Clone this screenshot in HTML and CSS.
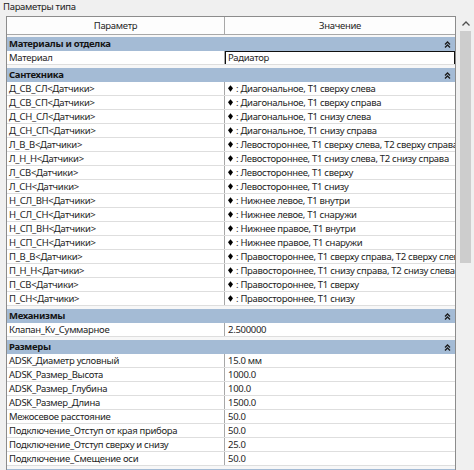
FILE: index.html
```html
<!DOCTYPE html>
<html lang="ru">
<head>
<meta charset="utf-8">
<title>Параметры типа</title>
<link rel="stylesheet" href="styles.css">
</head>
<body>
<div class="title">Параметры типа</div>
<div class="panel">
  <div class="grid">
    <div class="head">
      <div class="hcell hleft">Параметр</div>
      <div class="hcell hright">Значение</div>
    </div>

    <div class="group">
      <div class="ghead"><span class="gname">Материалы и отделка</span><svg class="chev" viewBox="0 0 7 7"><polyline points="1,3.5 3.5,1 6,3.5"/><polyline points="1,6.5 3.5,4 6,6.5"/></svg></div>
      <div class="row"><div class="k">Материал</div><div class="v"><div class="input">Радиатор</div></div></div>
    </div>

    <div class="group">
      <div class="ghead"><span class="gname">Сантехника</span><svg class="chev" viewBox="0 0 7 7"><polyline points="1,3.5 3.5,1 6,3.5"/><polyline points="1,6.5 3.5,4 6,6.5"/></svg></div>
      <div class="row"><div class="k">Д_СВ_СЛ&lt;Датчики&gt;</div><div class="v"><svg class="dia" viewBox="0 0 6 8"><polygon points="3,0 6,3.6 3,8 0,3.6"/></svg>: Диагональное, Т1 сверху слева</div></div>
      <div class="row"><div class="k">Д_СВ_СП&lt;Датчики&gt;</div><div class="v"><svg class="dia" viewBox="0 0 6 8"><polygon points="3,0 6,3.6 3,8 0,3.6"/></svg>: Диагональное, Т1 сверху справа</div></div>
      <div class="row"><div class="k">Д_СН_СЛ&lt;Датчики&gt;</div><div class="v"><svg class="dia" viewBox="0 0 6 8"><polygon points="3,0 6,3.6 3,8 0,3.6"/></svg>: Диагональное, Т1 снизу слева</div></div>
      <div class="row"><div class="k">Д_СН_СП&lt;Датчики&gt;</div><div class="v"><svg class="dia" viewBox="0 0 6 8"><polygon points="3,0 6,3.6 3,8 0,3.6"/></svg>: Диагональное, Т1 снизу справа</div></div>
      <div class="row"><div class="k">Л_В_В&lt;Датчики&gt;</div><div class="v"><svg class="dia" viewBox="0 0 6 8"><polygon points="3,0 6,3.6 3,8 0,3.6"/></svg>: Левостороннее, Т1 сверху слева, Т2 сверху справа</div></div>
      <div class="row"><div class="k">Л_Н_Н&lt;Датчики&gt;</div><div class="v"><svg class="dia" viewBox="0 0 6 8"><polygon points="3,0 6,3.6 3,8 0,3.6"/></svg>: Левостороннее, Т1 снизу слева, Т2 снизу справа</div></div>
      <div class="row"><div class="k">Л_СВ&lt;Датчики&gt;</div><div class="v"><svg class="dia" viewBox="0 0 6 8"><polygon points="3,0 6,3.6 3,8 0,3.6"/></svg>: Левостороннее, Т1 сверху</div></div>
      <div class="row"><div class="k">Л_СН&lt;Датчики&gt;</div><div class="v"><svg class="dia" viewBox="0 0 6 8"><polygon points="3,0 6,3.6 3,8 0,3.6"/></svg>: Левостороннее, Т1 снизу</div></div>
      <div class="row"><div class="k">Н_СЛ_ВН&lt;Датчики&gt;</div><div class="v"><svg class="dia" viewBox="0 0 6 8"><polygon points="3,0 6,3.6 3,8 0,3.6"/></svg>: Нижнее левое, Т1 внутри</div></div>
      <div class="row"><div class="k">Н_СЛ_СН&lt;Датчики&gt;</div><div class="v"><svg class="dia" viewBox="0 0 6 8"><polygon points="3,0 6,3.6 3,8 0,3.6"/></svg>: Нижнее левое, Т1 снаружи</div></div>
      <div class="row"><div class="k">Н_СП_ВН&lt;Датчики&gt;</div><div class="v"><svg class="dia" viewBox="0 0 6 8"><polygon points="3,0 6,3.6 3,8 0,3.6"/></svg>: Нижнее правое, Т1 внутри</div></div>
      <div class="row"><div class="k">Н_СП_СН&lt;Датчики&gt;</div><div class="v"><svg class="dia" viewBox="0 0 6 8"><polygon points="3,0 6,3.6 3,8 0,3.6"/></svg>: Нижнее правое, Т1 снаружи</div></div>
      <div class="row"><div class="k">П_В_В&lt;Датчики&gt;</div><div class="v"><svg class="dia" viewBox="0 0 6 8"><polygon points="3,0 6,3.6 3,8 0,3.6"/></svg>: Правостороннее, Т1 сверху справа, Т2 сверху слева</div></div>
      <div class="row"><div class="k">П_Н_Н&lt;Датчики&gt;</div><div class="v"><svg class="dia" viewBox="0 0 6 8"><polygon points="3,0 6,3.6 3,8 0,3.6"/></svg>: Правостороннее, Т1 снизу справа, Т2 снизу слева</div></div>
      <div class="row"><div class="k">П_СВ&lt;Датчики&gt;</div><div class="v"><svg class="dia" viewBox="0 0 6 8"><polygon points="3,0 6,3.6 3,8 0,3.6"/></svg>: Правостороннее, Т1 сверху</div></div>
      <div class="row"><div class="k">П_СН&lt;Датчики&gt;</div><div class="v"><svg class="dia" viewBox="0 0 6 8"><polygon points="3,0 6,3.6 3,8 0,3.6"/></svg>: Правостороннее, Т1 снизу</div></div>
    </div>

    <div class="group">
      <div class="ghead"><span class="gname">Механизмы</span><svg class="chev" viewBox="0 0 7 7"><polyline points="1,3.5 3.5,1 6,3.5"/><polyline points="1,6.5 3.5,4 6,6.5"/></svg></div>
      <div class="row"><div class="k">Клапан_Kv_Суммарное</div><div class="v">2.500000</div></div>
    </div>

    <div class="group">
      <div class="ghead"><span class="gname">Размеры</span><svg class="chev" viewBox="0 0 7 7"><polyline points="1,3.5 3.5,1 6,3.5"/><polyline points="1,6.5 3.5,4 6,6.5"/></svg></div>
      <div class="row"><div class="k">ADSK_Диаметр условный</div><div class="v">15.0 мм</div></div>
      <div class="row"><div class="k">ADSK_Размер_Высота</div><div class="v">1000.0</div></div>
      <div class="row"><div class="k">ADSK_Размер_Глубина</div><div class="v">100.0</div></div>
      <div class="row"><div class="k">ADSK_Размер_Длина</div><div class="v">1500.0</div></div>
      <div class="row"><div class="k">Межосевое расстояние</div><div class="v">50.0</div></div>
      <div class="row"><div class="k">Подключение_Отступ от края прибора</div><div class="v">50.0</div></div>
      <div class="row"><div class="k">Подключение_Отступ сверху и снизу</div><div class="v">25.0</div></div>
      <div class="row"><div class="k">Подключение_Смещение оси</div><div class="v">50.0</div></div>
    </div>

    <div class="group">
      <div class="ghead"></div>
    </div>
  </div>
  <div class="scroll">
    <div class="sarrow"><svg viewBox="0 0 8 5"><polyline points="0.5,4.5 4,1 7.5,4.5"/></svg></div>
    <div class="thumb"></div>
  </div>
</div>
</body>
</html>
```

FILE: styles.css
```css
html, body {
  margin: 0;
  padding: 0;
  height: 100%;
  overflow: hidden;
}
body {
  background: #f0f0f0;
  font-family: "Noto Sans", "Open Sans", sans-serif;
  font-size: 9.5px;
  letter-spacing: -0.3px;
  color: #1e1e1e;
}
.title {
  height: 16px;
  line-height: 14px;
  padding-left: 3px;
  color: #222;
}
.panel {
  display: flex;
  align-items: flex-start;
  padding-left: 6px;
}
.grid {
  width: 448px;
  border: 1px solid #8c8c8c;
  border-bottom: none;
  background: #f7f7f7;
  height: 460px;
  overflow: hidden;
}
.head {
  display: flex;
  height: 17px;
  background: #fdfdfd;
  border-bottom: 1px solid #a8a8a8;
  margin-bottom: 2px;
}
.hcell {
  line-height: 17px;
  text-align: center;
  color: #262626;
}
.hleft {
  width: 217px;
  border-right: 1px solid #a8a8a8;
}
.hright {
  flex: 1;
}
.group {
  margin-bottom: 3px;
}
.ghead {
  display: flex;
  align-items: center;
  justify-content: space-between;
  height: 14px;
  background: #a4bbd5;
  padding: 0 4px 0 2px;
}
.gname {
  font-weight: bold;
  color: #141414;
  line-height: 14px;
}
.chev {
  width: 7px;
  height: 7px;
  fill: none;
  stroke: #1a1a1a;
  stroke-width: 1.3;
}
.row {
  display: flex;
  height: 13px;
  border-bottom: 1px solid #dedede;
  background: #ffffff;
}
.k {
  width: 215px;
  padding-left: 2px;
  border-right: 1px solid #a8a8a8;
  line-height: 13px;
  white-space: nowrap;
  overflow: hidden;
}
.v {
  flex: 1;
  min-width: 0;
  padding-left: 3px;
  line-height: 13px;
  white-space: nowrap;
  overflow: hidden;
  display: flex;
  align-items: center;
}
.v .dia {
  width: 5px;
  height: 7px;
  fill: #000;
  margin-right: 3px;
  flex: none;
}
.row .input {
  flex: 1;
  height: 12px;
  line-height: 12px;
  border: 1px solid #101010;
  margin-left: -3px;
  padding-left: 2px;
  background: #fff;
}
.scroll {
  width: 17px;
  margin-left: 1px;
  height: 454px;
  display: flex;
  flex-direction: column;
  align-items: center;
}
.sarrow {
  height: 15px;
  display: flex;
  align-items: center;
  justify-content: center;
  width: 17px;
}
.sarrow svg {
  width: 8px;
  height: 5px;
  fill: none;
  stroke: #505050;
  stroke-width: 1.3;
}
.thumb {
  width: 11px;
  height: 232px;
  background: #cdcdcd;
}
```
